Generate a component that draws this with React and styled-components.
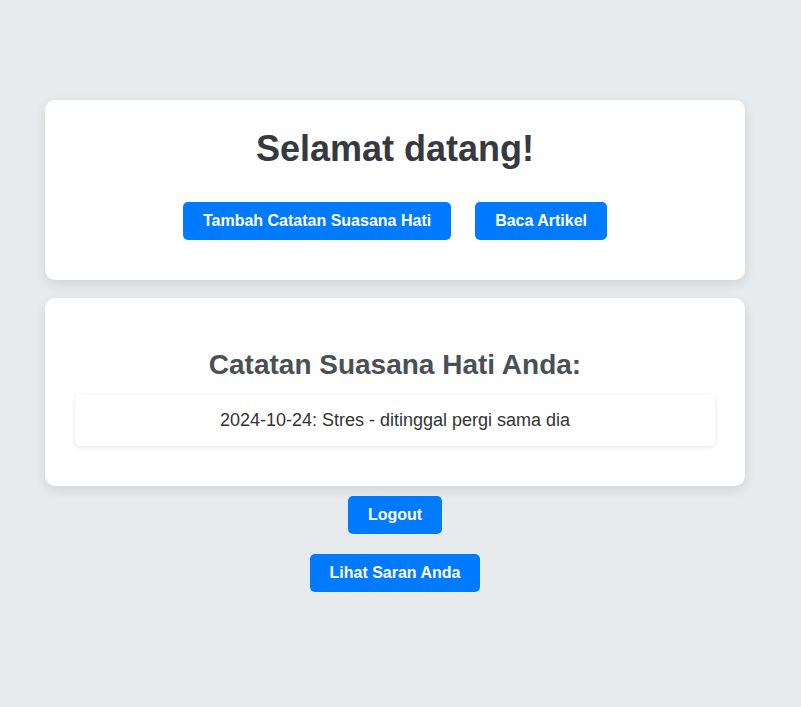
import React from 'react';
import styled, { createGlobalStyle } from 'styled-components'

const GlobalStyle = createGlobalStyle`
  html, body {
    margin: 0;
    padding: 0;
    background: #e8ebee;
  }
  body {
    font-family: 'Liberation Sans', Arial, sans-serif;
    color: #333;
  }
`

const Page = styled.div`
  min-height: 707px;
  box-sizing: border-box;
  padding: 100px 11px 0 0;
  display: flex;
  flex-direction: column;
  align-items: center;
`

const Card = styled.section`
  box-sizing: border-box;
  width: 700px;
  background: #fff;
  border-radius: 10px;
  box-shadow: 0 4px 12px rgba(0, 0, 0, 0.1);
  padding: ${props => props.pad};
  margin-bottom: ${props => props.gap || '0'};
  text-align: center;
`

const Title = styled.h1`
  margin: 0 0 33px;
  font-size: 36px;
  font-weight: 700;
  line-height: 41px;
  color: #343a40;
`

const SubTitle = styled.h2`
  margin: 0 0 14px;
  font-size: 28px;
  font-weight: 700;
  line-height: 32px;
  color: #495057;
`

const ButtonRow = styled.div`
  display: flex;
  justify-content: center;
  gap: 24px;
`

const Button = styled.button`
  font-family: 'Liberation Sans', Arial, sans-serif;
  font-size: 16px;
  font-weight: 700;
  line-height: 18px;
  color: #fff;
  background: #007bff;
  border: none;
  border-radius: 5px;
  padding: 10px 20px;
  cursor: pointer;
  margin-top: ${props => props.top || '0'};

  &:hover {
    background: #0069d9;
  }
`

const MoodList = styled.ul`
  list-style: none;
  margin: 0;
  padding: 0;
`

const MoodItem = styled.li`
  background: #fff;
  border-radius: 5px;
  box-shadow: 0 1px 5px rgba(0, 0, 0, 0.1);
  padding: 15px;
  font-size: 18px;
  line-height: 21px;
  color: #333;
`

const moods = [
  { date: '2024-10-24', mood: 'Stres', note: 'ditinggal pergi sama dia' },
]

const App = () => {
  return (
    <>
      <GlobalStyle />
      <Page>
        <Card pad="28px 30px 40px" gap="18px">
          <Title>Selamat datang!</Title>
          <ButtonRow>
            <Button>Tambah Catatan Suasana Hati</Button>
            <Button>Baca Artikel</Button>
          </ButtonRow>
        </Card>
        <Card pad="51px 30px 40px">
          <SubTitle>Catatan Suasana Hati Anda:</SubTitle>
          <MoodList>
            {moods.map(m => (
              <MoodItem key={m.date}>{m.date}: {m.mood} - {m.note}</MoodItem>
            ))}
          </MoodList>
        </Card>
        <Button top="10px">Logout</Button>
        <Button top="20px">Lihat Saran Anda</Button>
      </Page>
    </>
  );
}

export default App;
